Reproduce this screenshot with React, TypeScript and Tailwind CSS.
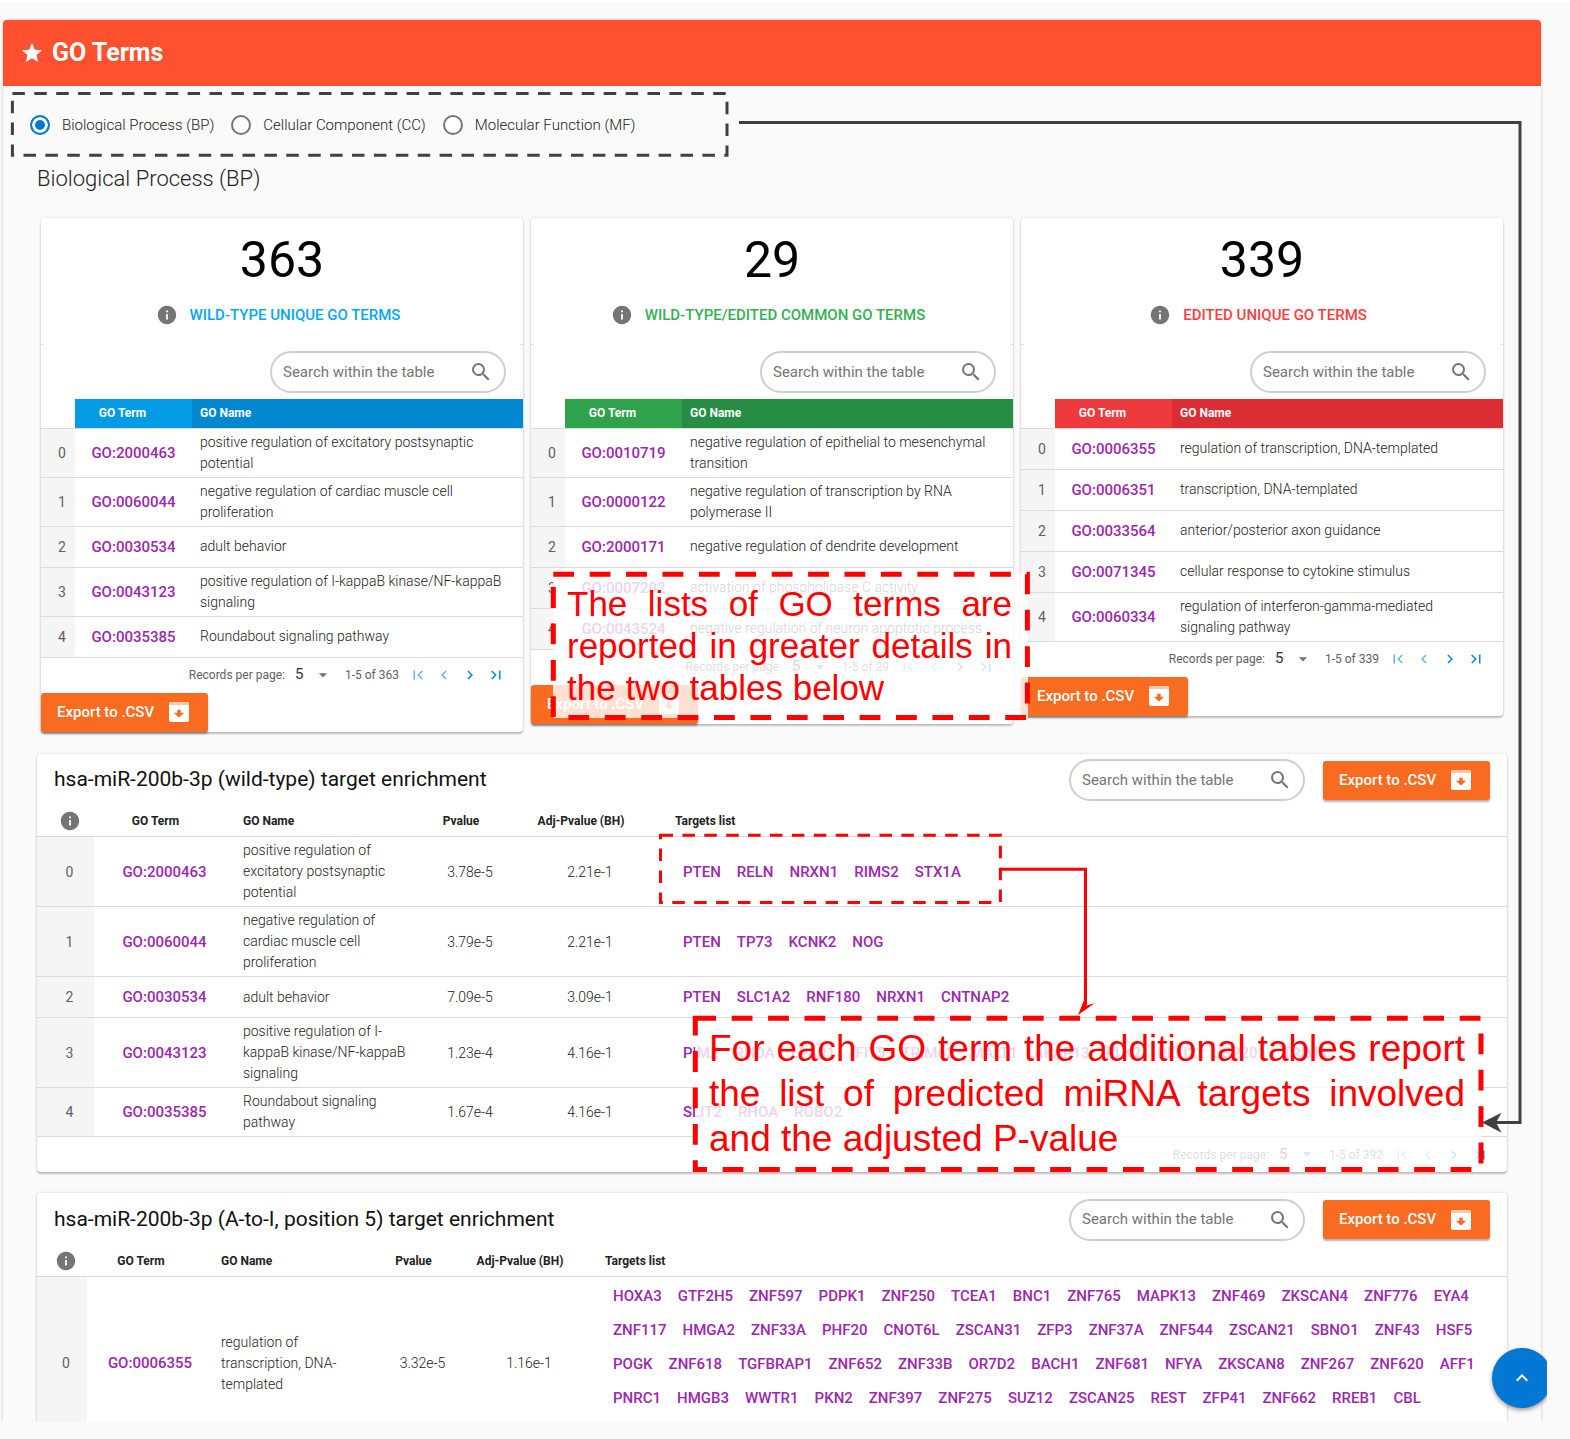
import React, { useState } from "react";
import {
  MdArrowDropDown,
  MdChevronLeft,
  MdChevronRight,
  MdFirstPage,
  MdInfo,
  MdKeyboardArrowUp,
  MdLastPage,
  MdSearch,
  MdStar,
} from "react-icons/md";

type Term = { id: string; name: string };
type Enriched = Term & { p: string; adj: string; targets: string[] };

const categories = [
  "Biological Process (BP)",
  "Cellular Component (CC)",
  "Molecular Function (MF)",
];

const summaries = [
  {
    key: "wild",
    count: "363",
    label: "WILD-TYPE UNIQUE GO TERMS",
    labelClass: "text-[#03a9f4]",
    termClass: "bg-[#039be5]",
    nameClass: "bg-[#0288d1]",
    terms: [
      { id: "GO:2000463", name: "positive regulation of excitatory postsynaptic potential" },
      { id: "GO:0060044", name: "negative regulation of cardiac muscle cell proliferation" },
      { id: "GO:0030534", name: "adult behavior" },
      { id: "GO:0043123", name: "positive regulation of I-kappaB kinase/NF-kappaB signaling" },
      { id: "GO:0035385", name: "Roundabout signaling pathway" },
    ],
  },
  {
    key: "common",
    count: "29",
    label: "WILD-TYPE/EDITED COMMON GO TERMS",
    labelClass: "text-[#34b053]",
    termClass: "bg-[#2fa24c]",
    nameClass: "bg-[#268e42]",
    terms: [
      { id: "GO:0010719", name: "negative regulation of epithelial to mesenchymal transition" },
      { id: "GO:0000122", name: "negative regulation of transcription by RNA polymerase II" },
      { id: "GO:2000171", name: "negative regulation of dendrite development" },
      { id: "GO:0007202", name: "activation of phospholipase C activity" },
      { id: "GO:0043524", name: "negative regulation of neuron apoptotic process" },
    ],
  },
  {
    key: "edited",
    count: "339",
    label: "EDITED UNIQUE GO TERMS",
    labelClass: "text-[#ff3d3d]",
    termClass: "bg-[#ee393d]",
    nameClass: "bg-[#dc2d34]",
    terms: [
      { id: "GO:0006355", name: "regulation of transcription, DNA-templated" },
      { id: "GO:0006351", name: "transcription, DNA-templated" },
      { id: "GO:0033564", name: "anterior/posterior axon guidance" },
      { id: "GO:0071345", name: "cellular response to cytokine stimulus" },
      { id: "GO:0060334", name: "regulation of interferon-gamma-mediated signaling pathway" },
    ],
  },
];

const wildRows: Enriched[] = [
  { id: "GO:2000463", name: "positive regulation of excitatory postsynaptic potential", p: "3.78e-5", adj: "2.21e-1", targets: ["PTEN", "RELN", "NRXN1", "RIMS2", "STX1A"] },
  { id: "GO:0060044", name: "negative regulation of cardiac muscle cell proliferation", p: "3.79e-5", adj: "2.21e-1", targets: ["PTEN", "TP73", "KCNK2", "NOG"] },
  { id: "GO:0030534", name: "adult behavior", p: "7.09e-5", adj: "3.09e-1", targets: ["PTEN", "SLC1A2", "RNF180", "NRXN1", "CNTNAP2"] },
  { id: "GO:0043123", name: "positive regulation of I-kappaB kinase/NF-kappaB signaling", p: "1.23e-4", adj: "4.16e-1", targets: ["PIM2", "RHOA", "LPAR1", "IFIT5", "TRIM62", "MALT1", "AKAP13", "PLK2", "PELI2", "USP201", "TRIM8"] },
  { id: "GO:0035385", name: "Roundabout signaling pathway", p: "1.67e-4", adj: "4.16e-1", targets: ["SLIT2", "RHOA", "ROBO2"] },
];

const editedRows: Enriched[] = [
  {
    id: "GO:0006355",
    name: "regulation of transcription, DNA-templated",
    p: "3.32e-5",
    adj: "1.16e-1",
    targets:
      "HOXA3 GTF2H5 ZNF597 PDPK1 ZNF250 TCEA1 BNC1 ZNF765 MAPK13 ZNF469 ZKSCAN4 ZNF776 EYA4 ZNF117 HMGA2 ZNF33A PHF20 CNOT6L ZSCAN31 ZFP3 ZNF37A ZNF544 ZSCAN21 SBNO1 ZNF43 HSF5 POGK ZNF618 TGFBRAP1 ZNF652 ZNF33B OR7D2 BACH1 ZNF681 NFYA ZKSCAN8 ZNF267 ZNF620 AFF1 PNRC1 HMGB3 WWTR1 PKN2 ZNF397 ZNF275 SUZ12 ZSCAN25 REST ZFP41 ZNF662 RREB1 CBL".split(" "),
  },
];

const cardShadow = "shadow-[0_2px_2px_rgba(0,0,0,0.22),0_0_3px_rgba(0,0,0,0.12)]";

function SearchBox({ id }: { id: string }) {
  return (
    <div className="flex h-[42px] w-[236px] items-center rounded-full border-2 border-[#cfcfcf] bg-white px-[11px]">
      <input
        id={id}
        type="search"
        aria-label="Search within the table"
        placeholder="Search within the table"
        className="min-w-0 flex-1 bg-transparent text-[15px] text-[#555] outline-none placeholder:text-[#757575]"
      />
      <MdSearch className="size-6 text-[#757575]" />
    </div>
  );
}

function ArchiveIcon() {
  return (
    <svg viewBox="0 0 24 24" className="size-6" aria-hidden="true">
      <rect x="2" y="2" width="20" height="20" rx="2" fill="#ffffff" />
      <path d="M4 2H20A2 2 0 0 1 22 4V5H2V4A2 2 0 0 1 4 2Z" fill="#fcc9ab" />
      <path d="M12 17.5L6.8 12.7H10.3V9.8H13.7V12.7H17.2Z" fill="#f96b20" />
    </svg>
  );
}

function ExportButton() {
  return (
    <button
      type="button"
      className="flex h-[39px] w-[167px] items-center gap-[13px] rounded-[3px] bg-[#f96b20] pl-4 text-[15px] font-medium text-white shadow-[0_2px_2px_rgba(0,0,0,0.3)]"
    >
      Export to .CSV
      <ArchiveIcon />
    </button>
  );
}

function Pagination({ id, range }: { id: string; range: string }) {
  return (
    <div className="flex h-[35px] items-center justify-end pr-[14px] text-xs text-[#616161]">
      <label htmlFor={id}>Records per page:</label>
      <div className="relative ml-[10px] flex items-center">
        <select id={id} defaultValue="5" className="w-[38px] appearance-none bg-transparent text-[15px] text-[#333] outline-none">
          <option>5</option>
          <option>10</option>
          <option>20</option>
        </select>
        <MdArrowDropDown className="pointer-events-none absolute right-0 size-5 text-[#757575]" />
      </div>
      <span className="mr-[6px] ml-3">{range}</span>
      <button type="button" aria-label="First page" className="flex w-[26px] justify-center text-[#64b5f6]">
        <MdFirstPage className="size-[18px]" />
      </button>
      <button type="button" aria-label="Previous page" className="flex w-[26px] justify-center text-[#64b5f6]">
        <MdChevronLeft className="size-[18px]" />
      </button>
      <button type="button" aria-label="Next page" className="flex w-[26px] justify-center text-[#0288ee]">
        <MdChevronRight className="size-[18px]" />
      </button>
      <button type="button" aria-label="Last page" className="flex w-[26px] justify-center text-[#0288ee]">
        <MdLastPage className="size-[18px]" />
      </button>
    </div>
  );
}

const rowClass = "h-[41px] border-b border-[#dcdcdc]";
const linkClass = "text-[15px] font-medium text-[#9c27b0]";

function SummaryCard({ data }: { data: (typeof summaries)[number] }) {
  return (
    <section className={`rounded bg-white ${cardShadow}`}>
      <div className="flex h-[126px] flex-col items-center pt-3">
        <p className="text-[50px] leading-[60px] text-black">{data.count}</p>
        <h3 className={`mt-[14px] flex items-center gap-3 pr-2 text-[15px] leading-5 font-medium ${data.labelClass}`}>
          <MdInfo className="size-[22px] text-[#757575]" />
          {data.label}
        </h3>
      </div>
      <div className="flex h-px justify-between">
        <span className="w-[3px] bg-[#e0e0e0]" />
        <span className="w-[3px] bg-[#e0e0e0]" />
      </div>
      <div className="flex justify-end pt-[6px] pr-[17px] pb-[6px]">
        <SearchBox id={`search-${data.key}`} />
      </div>
      <table className="w-full table-fixed border-collapse text-left">
        <colgroup>
          <col className="w-[34px]" />
          <col className="w-[117px]" />
          <col />
        </colgroup>
        <thead>
          <tr className="h-[29px] border-b border-[#dcdcdc] text-xs font-bold text-white">
            <td />
            <th className={`pr-[22px] text-center ${data.termClass}`}>GO Term</th>
            <th className={`pl-2 ${data.nameClass}`}>GO Name</th>
          </tr>
        </thead>
        <tbody>
          {data.terms.map((t, i) => (
            <tr key={t.id} className={rowClass}>
              <td className="bg-[#f5f5f5] pl-2 text-center text-sm text-[#616161]">{i}</td>
              <td className="text-center">
                <a href="#term" className={linkClass}>{t.id}</a>
              </td>
              <td className="py-[3px] pr-4 pl-2 text-sm leading-[21px] font-light text-[#222]">{t.name}</td>
            </tr>
          ))}
        </tbody>
      </table>
      <Pagination id={`size-${data.key}`} range={`1-5 of ${data.count}`} />
      <ExportButton />
    </section>
  );
}

function EnrichmentTable({
  id,
  title,
  rows,
  wide,
  range,
}: {
  id: string;
  title: string;
  rows: Enriched[];
  wide: boolean;
  range?: string;
}) {
  const cellPad = range ? "" : "pt-7";
  return (
    <section className={`bg-white ${range ? "rounded" : "rounded-t"} ${cardShadow}`}>
      <div className="flex h-[53px] items-center px-[17px]">
        <h3 className="flex-1 text-[21px] text-[#111]">{title}</h3>
        <SearchBox id={`search-${id}`} />
        <div className="ml-[18px]">
          <ExportButton />
        </div>
      </div>
      <table className="w-full table-fixed border-collapse text-left">
        <colgroup>
          <col className={wide ? "w-[57px]" : "w-[50px]"} />
          <col className={wide ? "w-[141px]" : "w-[126px]"} />
          <col className={wide ? "w-[192px]" : "w-[171px]"} />
          <col className={wide ? "w-[86px]" : "w-[77px]"} />
          <col className={wide ? "w-[154px]" : "w-[136px]"} />
          <col />
        </colgroup>
        <thead>
          <tr className="h-[30px] border-b border-[#dcdcdc] text-xs font-bold text-[#222]">
            <td className="pl-2">
              <MdInfo className="mx-auto size-[22px] text-[#757575]" />
            </td>
            <th className="pr-[18px] text-center">GO Term</th>
            <th className="pl-2">GO Name</th>
            <th className="pr-[18px] text-center">Pvalue</th>
            <th className="pr-[18px] text-center whitespace-nowrap">Adj-Pvalue (BH)</th>
            <th className="pl-2">Targets list</th>
          </tr>
        </thead>
        <tbody>
          {rows.map((r, i) => (
            <tr key={r.id} className={range ? rowClass : "h-[146px]"}>
              <td className={`bg-[#f5f5f5] pl-2 text-center text-sm text-[#616161] ${cellPad}`}>{i}</td>
              <td className={`text-center ${cellPad}`}>
                <a href="#term" className={linkClass}>{r.id}</a>
              </td>
              <td className={`pl-2 text-sm leading-[21px] font-light text-[#222] ${wide ? "py-[3px] pr-5" : "pt-7 pr-10"}`}>{r.name}</td>
              <td className={`text-center text-sm font-light text-[#222] ${cellPad}`}>{r.p}</td>
              <td className={`text-center text-sm font-light text-[#222] ${cellPad}`}>{r.adj}</td>
              <td className={`pr-4 pl-2 ${range ? "" : "pb-1"}`}>
                <div className="flex flex-wrap">
                  {r.targets.map((t) => (
                    <a key={t} href="#target" className={`px-2 leading-[34px] ${linkClass}`}>{t}</a>
                  ))}
                </div>
              </td>
            </tr>
          ))}
        </tbody>
      </table>
      {range && <Pagination id={`size-${id}`} range={range} />}
    </section>
  );
}

function Annotations() {
  return (
    <>
      <div className="absolute top-[572px] left-[553px] h-[144px] w-[475px] bg-white/80 pt-[9px] pr-4 pl-[14px] text-justify font-['Liberation_Sans',Arial,sans-serif] text-[35px] leading-[42px] text-[#ff0000]">
        The lists of GO terms are reported in greater details in the two tables below
      </div>
      <div className="absolute top-[1016px] left-[695px] h-[151px] w-[786px] bg-white/80 pt-2 pr-4 pl-[14px] text-justify font-['Liberation_Sans',Arial,sans-serif] text-[37px] leading-[45px] text-[#ff0000]">
        For each GO term the additional tables report the list of predicted miRNA targets involved and the adjusted P-value
      </div>
      <svg
        className="pointer-events-none absolute -top-[2px] left-0"
        width="1570"
        height="1439"
        viewBox="0 0 1570 1439"
        fill="none"
        aria-hidden="true"
      >
        <path d="M12.4 93.6H727V155.3H12.4Z" stroke="#404040" strokeWidth="3" strokeDasharray="12.5 9.4" />
        <path d="M739 122.4H1520V1122.6H1494" stroke="#404040" strokeWidth="3" />
        <path d="M1482 1122.6L1501.5 1112.8L1496 1122.6L1501.5 1132.8Z" fill="#404040" />
        <path d="M660.5 835.3H1000.4V902.5H660.5Z" stroke="#ff0000" strokeWidth="3" strokeDasharray="12.5 9.4" />
        <path d="M1000 869.3H1085.5V1005" stroke="#ff0000" strokeWidth="3" />
        <path d="M1078 1015L1084 1000L1086.5 1005.5L1094.7 1003.3Z" fill="#ff0000" />
        <path d="M553.3 574.3H1027.4V717.6H553.3Z" stroke="#ff0000" strokeWidth="5" strokeDasharray="20.8 15.6" />
        <path d="M695.3 1018.3H1481V1169.4H695.3Z" stroke="#ff0000" strokeWidth="5" strokeDasharray="20.8 15.6" />
      </svg>
    </>
  );
}

export default function App() {
  const [category, setCategory] = useState(categories[0]);
  return (
    <div className="relative min-h-screen border-t-2 border-white bg-[#fafafa] pt-[18px] pr-[29px] pb-[17px] pl-[3px] font-[Roboto,sans-serif]">
      <main className="rounded-t shadow-[0_0_3px_rgba(0,0,0,0.25)] [clip-path:inset(-4px_-4px_0_-4px)]">
        <header className="flex h-[66px] items-center gap-2 rounded-t bg-[#ff512f] pl-[17px] text-white">
          <MdStar className="size-6" />
          <h1 className="text-[25px] font-bold">GO Terms</h1>
        </header>

        <fieldset aria-label="Category" className="flex h-[78px] items-center gap-[17px] pl-[27px]">
          {categories.map((c) => (
            <label key={c} className="flex items-center gap-3 text-[15px] font-light text-[#222]">
              <input
                type="radio"
                name="category"
                checked={category === c}
                onChange={() => setCategory(c)}
                className="size-5 appearance-none rounded-full border-2 border-[#757575] bg-white checked:border-[#0277d4] checked:bg-[#0277d4] checked:shadow-[inset_0_0_0_3px_white]"
              />
              {c}
            </label>
          ))}
        </fieldset>

        <h2 className="pl-[34px] text-[22px] leading-[30px] font-light text-[#222]">{category}</h2>

        <div className="grid grid-cols-3 items-start gap-2 px-[38px] pt-[24px]">
          {summaries.map((s) => (
            <SummaryCard key={s.key} data={s} />
          ))}
        </div>

        <div className="flex flex-col gap-[21px] px-[34px] pt-[22px]">
          <EnrichmentTable id="wild-type" title="hsa-miR-200b-3p (wild-type) target enrichment" rows={wildRows} wide range="1-5 of 392" />
          <EnrichmentTable id="a-to-i" title="hsa-miR-200b-3p (A-to-I, position 5) target enrichment" rows={editedRows} wide={false} />
        </div>
      </main>

      <Annotations />

      <button
        type="button"
        aria-label="Back to top"
        className="absolute right-[18px] bottom-[31px] flex size-[60px] items-center justify-center rounded-full bg-[#0277d4] text-white shadow-[0_2px_4px_rgba(0,0,0,0.4)] [clip-path:inset(-8px_5px_-8px_-8px)]"
      >
        <MdKeyboardArrowUp className="size-6" />
      </button>
    </div>
  );
}
